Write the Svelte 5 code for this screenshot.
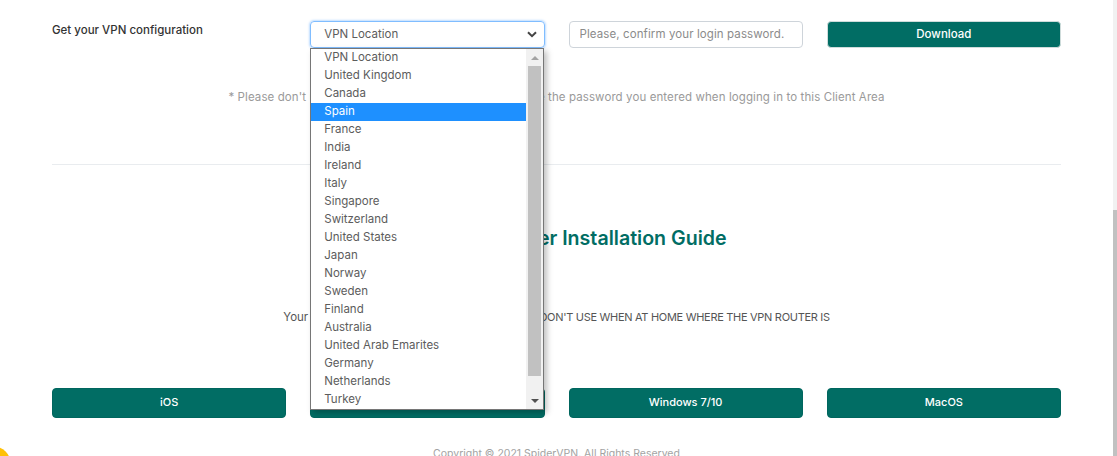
<script>
    const locations = [
        'VPN Location', 'United Kingdom', 'Canada', 'Spain', 'France', 'India', 'Ireland',
        'Italy', 'Singapore', 'Switzerland', 'United States', 'Japan', 'Norway', 'Sweden',
        'Finland', 'Australia', 'United Arab Emarites', 'Germany', 'Netherlands', 'Turkey'
    ];
    const selected = 'Spain';
    const guides = ['iOS', 'Android', 'Windows 7/10', 'MacOS'];
</script>

<div class="page">
    <div class="container">
        <div class="config-row">
            <div class="label">Get your VPN configuration</div>
            <div class="select-wrap">
                <div class="select">
                    <span>VPN Location</span>
                    <svg class="chevron" width="10" height="7" viewBox="0 0 10 7">
                        <path d="M1 1.2 5 5.2 9 1.2" fill="none" stroke="#444" stroke-width="2" />
                    </svg>
                </div>
                <div class="listbox">
                    <ul>
                        {#each locations as loc}
                            <li class:active={loc === selected}>{loc}</li>
                        {/each}
                    </ul>
                    <div class="list-scroll">
                        <span class="arrow up"></span>
                        <span class="thumb"></span>
                        <span class="arrow down"></span>
                    </div>
                </div>
            </div>
            <input class="password" type="password" placeholder="Please, confirm your login password." />
            <button class="download">Download</button>
        </div>

        <p class="note">* Please don't use your VPN account password here, use the password you entered when logging in to this Client Area</p>

        <hr />

        <h2>SpiderVPN Router Installation Guide</h2>

        <p class="warning">Your VPN router is meant for travelling abroad, <span class="caps">DON'T USE WHEN AT HOME WHERE THE VPN ROUTER IS</span></p>

        <div class="guides">
            {#each guides as guide}
                <button>{guide}</button>
            {/each}
        </div>

        <p class="copyright">Copyright © 2021 SpiderVPN. All Rights Reserved</p>
    </div>

    <div class="chat-bubble"></div>
    <div class="page-scroll"><span></span></div>
</div>

<style>
    :global(body) {
        margin: 0;
        background: #fff;
    }

    .page {
        position: relative;
        height: 456px;
        overflow: hidden;
        font-family: Inter, "Open Sans", sans-serif;
        font-size: 11.5px;
        color: #5c5c5c;
    }

    .container {
        padding: 21px 56px 0 52px;
    }

    .config-row,
    .guides {
        display: grid;
        grid-template-columns: repeat(4, 1fr);
        column-gap: 24px;
    }

    .config-row {
        height: 27px;
    }

    .label {
        font-weight: 500;
        color: #333;
        line-height: 18px;
    }

    .select-wrap {
        position: relative;
    }

    .select {
        box-sizing: border-box;
        height: 27px;
        display: flex;
        align-items: center;
        justify-content: space-between;
        padding: 0 7px 2px 13px;
        border: 1px solid #80bdff;
        border-radius: 4px;
        box-shadow: 0 0 2px 1px rgba(0, 123, 255, 0.25);
    }

    .chevron {
        margin-top: 2px;
    }

    .listbox {
        position: absolute;
        top: 27px;
        left: 0;
        right: 1px;
        height: 362px;
        box-sizing: border-box;
        display: flex;
        background: #fff;
        border: 1px solid #767676;
        box-shadow: 3px 3px 6px rgba(0, 0, 0, 0.25);
        z-index: 2;
    }

    ul {
        flex: 1;
        margin: 0;
        padding: 0;
        list-style: none;
    }

    li {
        height: 18px;
        line-height: 17px;
        padding-left: 13px;
    }

    li.active {
        background: #1e90ff;
        color: #fff;
    }

    .list-scroll {
        position: relative;
        width: 17px;
        background: #f1f1f1;
    }

    .thumb {
        position: absolute;
        top: 17px;
        left: 2px;
        width: 13px;
        height: 310px;
        background: #c1c1c1;
    }

    .arrow {
        position: absolute;
        left: 5px;
        border-left: 4px solid transparent;
        border-right: 4px solid transparent;
    }

    .arrow.up {
        top: 7px;
        border-bottom: 4px solid #a3a3a3;
    }

    .arrow.down {
        bottom: 6px;
        border-top: 4px solid #505050;
    }

    .password {
        box-sizing: border-box;
        height: 27px;
        width: 100%;
        padding: 0 9px 2px 10px;
        border: 1px solid #ced4da;
        border-radius: 4px;
        font: inherit;
        letter-spacing: 0.1px;
        outline: none;
    }

    .password::placeholder {
        color: #8b8b8b;
        opacity: 1;
    }

    button {
        border: 1px solid #00665e;
        border-radius: 4px;
        background: #016d64;
        color: #fff;
        font: inherit;
        font-weight: 500;
        padding: 0 0 1px;
    }

    .download {
        border-color: #cfdcdb;
    }

    .guides button {
        height: 30px;
        font-size: 11px;
        padding-bottom: 2px;
    }

    .note {
        margin: 40px 0 0;
        line-height: 18px;
        text-align: center;
        letter-spacing: 0.1px;
        color: #9a9a9a;
    }

    hr {
        margin: 58px 0 0;
        border: 0;
        border-top: 1px solid #e9ecef;
    }

    h2 {
        margin: 58px 0 0;
        line-height: 30px;
        font-size: 19.6px;
        font-weight: 600;
        text-align: center;
        color: #016d64;
    }

    .warning {
        margin: 55px 0 0;
        line-height: 18px;
        text-align: center;
        color: #555;
    }

    .caps {
        font-size: 11px;
        letter-spacing: -0.3px;
    }

    .guides {
        margin-top: 62px;
    }

    .copyright {
        margin: 27px 0 0;
        line-height: 18px;
        font-size: 10.5px;
        text-align: center;
        color: #a3a3a3;
    }

    .chat-bubble {
        position: absolute;
        left: -20px;
        top: 447px;
        width: 30px;
        height: 30px;
        border-radius: 50%;
        background: #ffc107;
    }

    .page-scroll {
        position: absolute;
        top: 0;
        right: 0;
        bottom: 0;
        width: 4px;
        background: #f1f1f1;
    }

    .page-scroll span {
        display: block;
        margin-top: 210px;
        height: 246px;
        background: #c1c1c1;
    }
</style>
